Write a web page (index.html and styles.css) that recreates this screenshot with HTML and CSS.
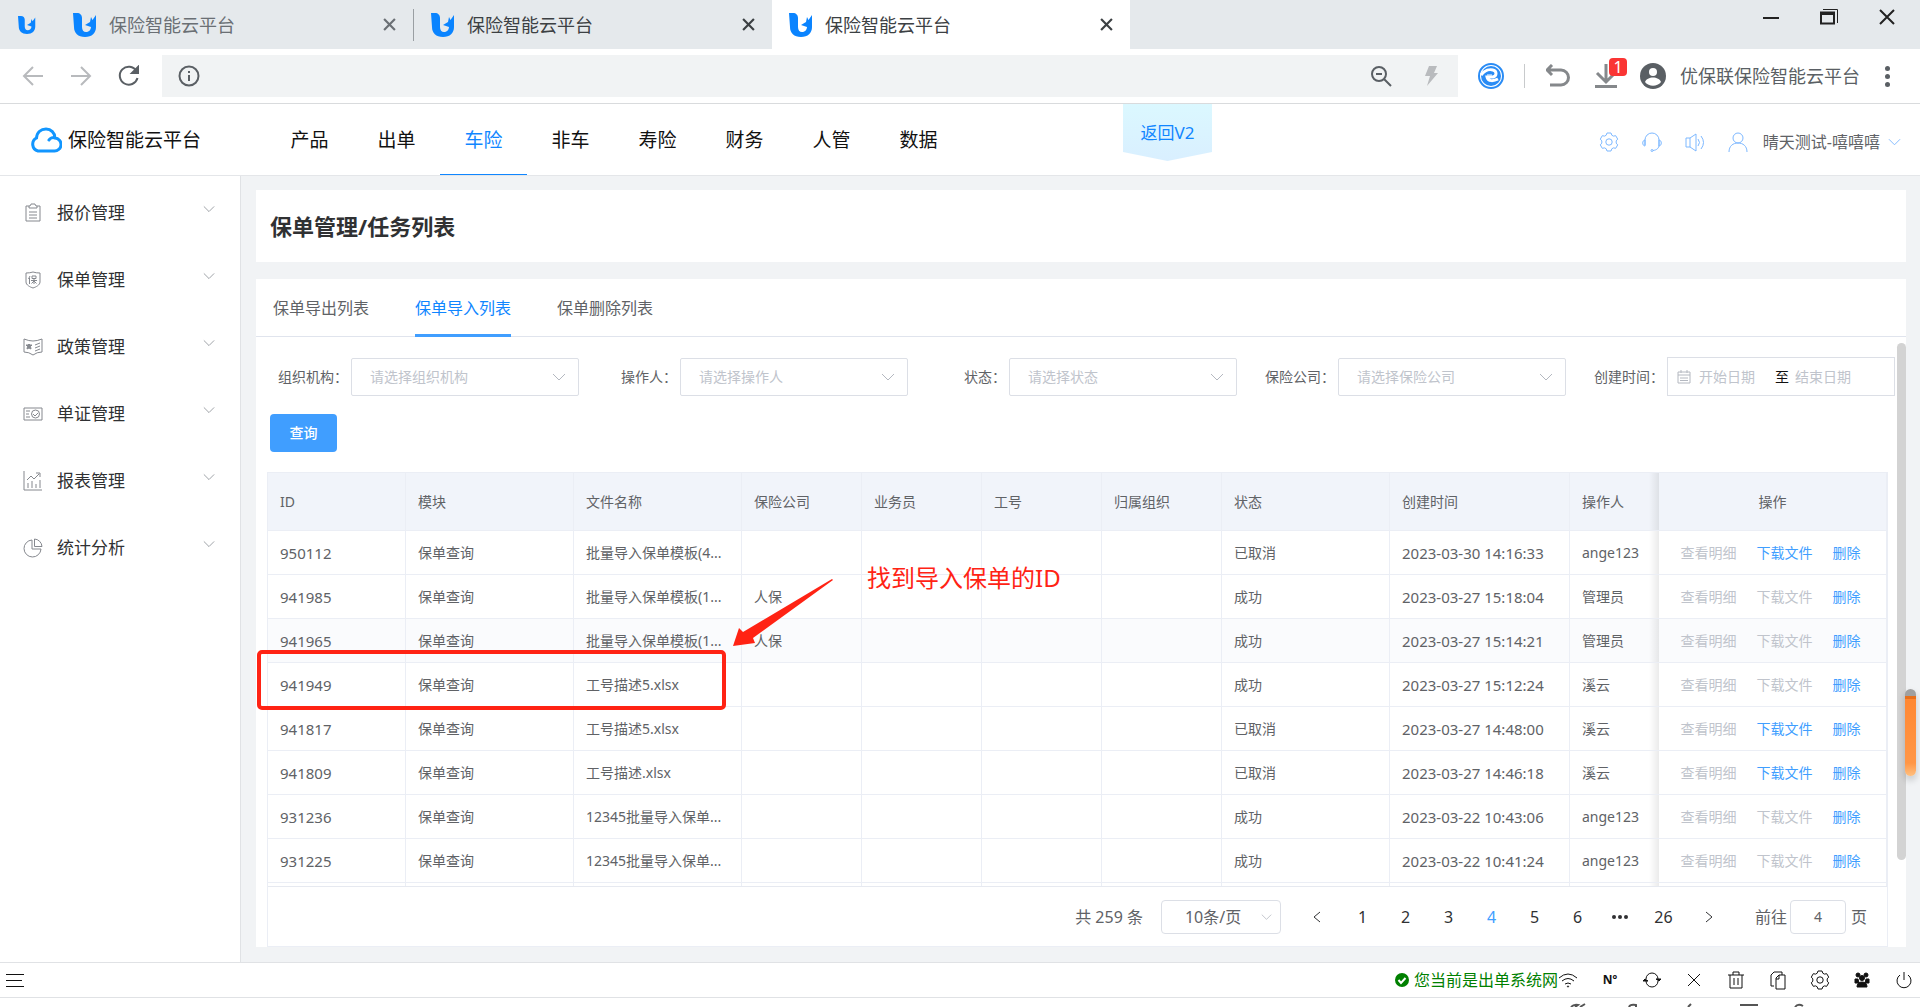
FILE: index.html
```html
<!DOCTYPE html>
<html lang="zh-CN">
<head>
  <meta charset="UTF-8" />
  <meta name="viewport" content="width=device-width, initial-scale=1.0"/>
  <title>保险智能云平台</title>
  <link rel="stylesheet" href="styles.css">
</head>
<body>

<svg class="defs" aria-hidden="true">
  <symbol id="i-logo" viewBox="0 0 24 24">
    <path fill="#0a84ff" d="M0 0h4c3 0 5 2 5 5v9c0 3 1.500 5 4 5s5-2 5-5l-6-2 5-3 1-5 1.500 3L23 2v12c0 6-4 10-11 10S1 20 1 14z"/>
  </symbol>
  <symbol id="i-down" viewBox="0 0 14 8"><path d="M1 1l6 6 6-6"/></symbol>
  <symbol id="i-close" viewBox="0 0 12 12"><path d="M1 1l10 10M11 1L1 11"/></symbol>
  <symbol id="i-gear" viewBox="0 0 20 20">
    <circle cx="10" cy="10" r="3.200"/>
    <path d="M8 1h4l.8 2.200 1.600.9 2.300-.4 2 3.400-1.500 1.800v2.200l1.500 1.800-2 3.400-2.300-.4-1.600.9L12 19H8l-.8-2.200-1.600-.9-2.300.4-2-3.400 1.500-1.800V8.900L1.300 7.100l2-3.400 2.300.4 1.600-.9z"/>
  </symbol>
</svg>

<!-- 标签栏 -->
<div class="tab-strip">
  <svg class="pin-icon"><use href="#i-logo"/></svg>
  <div class="b-tab dim"><svg class="fav"><use href="#i-logo"/></svg><span>保险智能云平台</span><button class="x" aria-label="关闭"><svg><use href="#i-close"/></svg></button></div>
  <div class="b-tab"><svg class="fav"><use href="#i-logo"/></svg><span>保险智能云平台</span><button class="x" aria-label="关闭"><svg><use href="#i-close"/></svg></button></div>
  <div class="b-tab on"><svg class="fav"><use href="#i-logo"/></svg><span>保险智能云平台</span><button class="x" aria-label="关闭"><svg><use href="#i-close"/></svg></button></div>
  <div class="win-btns">
    <button aria-label="最小化"><svg viewBox="0 0 18 18"><path d="M1 10h16" stroke-width="2"/></svg></button>
    <button aria-label="还原"><svg viewBox="0 0 18 18"><path d="M1 4.500h13v11H1zM1 6h13" stroke-width="2"/><path d="M3 1.500h14.500V15"/></svg></button>
    <button aria-label="关闭窗口"><svg viewBox="0 0 18 18"><path d="M2 2l14 14M16 2L2 16" stroke-width="2"/></svg></button>
  </div>
</div>

<!-- 工具栏 -->
<div class="toolbar">
  <div class="nav-btns">
    <button class="off" aria-label="后退"><svg viewBox="0 0 22 22"><path d="M21 11H2M11 2l-9 9 9 9"/></svg></button>
    <button class="off" aria-label="前进"><svg viewBox="0 0 22 22"><path d="M1 11h19M11 2l9 9-9 9"/></svg></button>
    <button aria-label="刷新"><svg viewBox="0 0 22 22"><path d="M18.500 6A9 9 0 1 0 19.500 13"/><path class="fill" d="M20 2v6h-6z"/></svg></button>
  </div>
  <div class="address">
    <svg class="info" viewBox="0 0 22 22"><circle cx="11" cy="11" r="9.500"/><path d="M11 10v6M11 6v2"/></svg>
    <input class="url" type="text" aria-label="地址">
    <svg class="mag" viewBox="0 0 22 22"><circle cx="9" cy="9" r="7"/><path d="M14 14l7 7M6 9h6"/></svg>
    <svg class="bolt" viewBox="0 0 14 20"><path d="M5 0h8l-3 7h4L3 20l3-10H1z"/></svg>
  </div>
  <div class="tools">
    <svg class="ie" viewBox="0 0 26 26"><circle cx="13" cy="13" r="12" fill="#fff" stroke="#2a8cf5"/><circle cx="13" cy="13" r="10" fill="#2a8cf5"/><path d="M3 12c4-5 9-6 12-5 4 1 4 6 0 7H9c1 5 7 4 11 2" fill="none" stroke="#fff" stroke-width="3"/><path d="M9 12h5" stroke="#fff" stroke-width="1"/></svg>
    <span class="sep"></span>
    <button aria-label="撤销"><svg viewBox="0 0 24 24"><path d="M1 6h14a7 7 0 0 1 0 15H4M6 1L1 6l5 5"/></svg></button>
    <button class="dl" aria-label="下载"><svg viewBox="0 0 24 24"><path d="M12 0v17M3 9l9 9 9-9M1 22.500h22"/></svg><span class="badge">1</span></button>
    <svg class="avatar" viewBox="0 0 26 26"><circle cx="13" cy="13" r="13" fill="#5a5f64"/><circle cx="13" cy="9" r="4" fill="#fff"/><path d="M5 19c2-6 14-6 16 0-4 5-12 5-16 0z" fill="#fff"/></svg>
    <span class="user-name">优保联保险智能云平台</span>
    <button class="more" aria-label="更多"><i></i><i></i><i></i></button>
  </div>
</div>

<header class="header">
  <div class="brand">
    <svg viewBox="0 0 32 26"><path d="M8 24a7 7 0 0 1-1.500-13C7 5 11 2 16 2s9 4 9 9a6.500 6.500 0 0 1-1 13zM25 11c-2-1-5 0-6 2" fill="none" stroke="#1296ff" stroke-width="3" stroke-linecap="round"/></svg>
    保险智能云平台
  </div>
  <nav class="main-nav">
    <a href="#">产品</a>
    <a href="#">出单</a>
    <a href="#" class="active">车险</a>
    <a href="#">非车</a>
    <a href="#">寿险</a>
    <a href="#">财务</a>
    <a href="#">人管</a>
    <a href="#">数据</a>
  </nav>
  <a href="#" class="back-v2">返回V2</a>
  <div class="head-icons">
    <svg viewBox="0 0 20 20"><use href="#i-gear"/></svg>
    <svg viewBox="0 0 20 20"><path d="M3 13V8a7 7 0 0 1 14 0v5c0 3-2 5-6 5.500M3 8c-3 0-3 6 0 6zM17 8c3 0 3 6 0 6z"/><circle cx="10" cy="18.500" r="1"/></svg>
    <svg viewBox="0 0 20 20"><path d="M1 6h4l6-4v17l-6-4H1zM5 6v9M13 7q3 3.500 0 7M16 4q5 6.500 0 13"/></svg>
    <svg viewBox="0 0 20 20"><circle cx="10" cy="6" r="5"/><path d="M1 20c0-6 4-9 9-9s9 3 9 9"/></svg>
    <span>晴天测试-嘻嘻嘻</span>
    <svg class="arrow"><use href="#i-down"/></svg>
  </div>
</header>

<div class="layout">
  <aside class="sidebar">
    <a href="#"><svg class="ico" viewBox="0 0 20 20"><path d="M6 3H3v15h14V3h-3M6 5V3q2 0 2-2h4q0 2 2 2v2zM6 9h8M6 12h8M6 15h8"/></svg>报价管理<svg class="arrow"><use href="#i-down"/></svg></a>
    <a href="#"><svg class="ico" viewBox="0 0 20 20"><path d="M3 3q4 0 7-1 3 1 7 1v9c0 3-4 5-7 6-3-1-7-3-7-6zM7 6L5.500 9M6.500 8v6M9 6h4v2.500H9zM8 10.500h6M11 9v5M11 11l-2.500 2.500M11 11l2.500 2.500"/></svg>保单管理<svg class="arrow"><use href="#i-down"/></svg></a>
    <a href="#"><svg class="ico" viewBox="0 0 20 20"><path d="M1 2q5 2 9 2 4 0 9-2v13q-5 0-9 3-4-3-9-3zM12 8l5-2M12 11l5-2M12 14l5-2"/><path class="fill" d="M6 7l1 1h2L7.500 9.500 8 12l-2-1-2 1 .5-2.500L3 8h2z"/></svg>政策管理<svg class="arrow"><use href="#i-down"/></svg></a>
    <a href="#"><svg class="ico" viewBox="0 0 20 20"><path d="M1 4h18v12H1zM3 7h4M3 10h3M3 13h4M10 10l2 2 3-3"/><circle cx="12.500" cy="10" r="4"/></svg>单证管理<svg class="arrow"><use href="#i-down"/></svg></a>
    <a href="#"><svg class="ico" viewBox="0 0 20 20"><path d="M1 0v19h18M4 9l4-4 3 3 5-5M13 2h4v4M5 17v-5M9 17v-7M13 17v-4M17 17V9"/></svg>报表管理<svg class="arrow"><use href="#i-down"/></svg></a>
    <a href="#"><svg class="ico" viewBox="0 0 20 20"><path d="M9 2a8.500 8.500 0 1 0 9 9H9zM11.500 1v7.500H19A8 8 0 0 0 11.500 1z"/></svg>统计分析<svg class="arrow"><use href="#i-down"/></svg></a>
  </aside>

  <main class="content">
    <h1 class="page-title">保单管理/任务列表</h1>

    <section class="card">
      <div class="tabs">
        <a href="#">保单导出列表</a>
        <a href="#" class="active">保单导入列表</a>
        <a href="#">保单删除列表</a>
      </div>

      <form class="filters">
        <div class="field"><label for="org">组织机构：</label><div class="select"><select id="org"><option>请选择组织机构</option></select><svg><use href="#i-down"/></svg></div></div>
        <div class="field"><label for="operator">操作人：</label><div class="select"><select id="operator"><option>请选择操作人</option></select><svg><use href="#i-down"/></svg></div></div>
        <div class="field"><label for="status">状态：</label><div class="select"><select id="status"><option>请选择状态</option></select><svg><use href="#i-down"/></svg></div></div>
        <div class="field"><label for="company">保险公司：</label><div class="select"><select id="company"><option>请选择保险公司</option></select><svg><use href="#i-down"/></svg></div></div>
        <div class="field"><label for="start">创建时间：</label>
          <div class="date-range">
            <svg viewBox="0 0 14 14"><path d="M1 2h12v11H1zM1 5h12M4 0v3M10 0v3M3 8h8M3 10.500h8"/></svg>
            <input id="start" type="text" placeholder="开始日期">
            <span>至</span>
            <input type="text" placeholder="结束日期" aria-label="结束日期">
          </div>
        </div>
        <button type="button" class="btn-query">查询</button>
      </form>

      <div class="list-box">
        <div class="table-wrap">
          <table>
            <colgroup>
              <col class="c-id"><col class="c-mid"><col class="c-mid"><col class="c-sm"><col class="c-sm"><col class="c-sm"><col class="c-sm"><col class="c-mid"><col class="c-time"><col class="c-op"><col class="c-act">
            </colgroup>
            <thead>
              <tr><th>ID</th><th>模块</th><th>文件名称</th><th>保险公司</th><th>业务员</th><th>工号</th><th>归属组织</th><th>状态</th><th>创建时间</th><th class="op">操作人</th><th class="act">操作</th></tr>
            </thead>
            <tbody>
              <tr><td class="num">950112</td><td>保单查询</td><td>批量导入保单模板(4...</td><td></td><td></td><td></td><td></td><td>已取消</td><td class="num">2023-03-30 14:16:33</td><td class="op">ange123</td><td class="act"><button disabled>查看明细</button><button>下载文件</button><button>删除</button></td></tr>
              <tr><td class="num">941985</td><td>保单查询</td><td>批量导入保单模板(1...</td><td>人保</td><td></td><td></td><td></td><td>成功</td><td class="num">2023-03-27 15:18:04</td><td class="op">管理员</td><td class="act"><button disabled>查看明细</button><button disabled>下载文件</button><button>删除</button></td></tr>
              <tr class="hover"><td class="num">941965</td><td>保单查询</td><td>批量导入保单模板(1...</td><td>人保</td><td></td><td></td><td></td><td>成功</td><td class="num">2023-03-27 15:14:21</td><td class="op">管理员</td><td class="act"><button disabled>查看明细</button><button disabled>下载文件</button><button>删除</button></td></tr>
              <tr><td class="num">941949</td><td>保单查询</td><td>工号描述5.xlsx</td><td></td><td></td><td></td><td></td><td>成功</td><td class="num">2023-03-27 15:12:24</td><td class="op">溪云</td><td class="act"><button disabled>查看明细</button><button disabled>下载文件</button><button>删除</button></td></tr>
              <tr><td class="num">941817</td><td>保单查询</td><td>工号描述5.xlsx</td><td></td><td></td><td></td><td></td><td>已取消</td><td class="num">2023-03-27 14:48:00</td><td class="op">溪云</td><td class="act"><button disabled>查看明细</button><button>下载文件</button><button>删除</button></td></tr>
              <tr><td class="num">941809</td><td>保单查询</td><td>工号描述.xlsx</td><td></td><td></td><td></td><td></td><td>已取消</td><td class="num">2023-03-27 14:46:18</td><td class="op">溪云</td><td class="act"><button disabled>查看明细</button><button>下载文件</button><button>删除</button></td></tr>
              <tr><td class="num">931236</td><td>保单查询</td><td>12345批量导入保单...</td><td></td><td></td><td></td><td></td><td>成功</td><td class="num">2023-03-22 10:43:06</td><td class="op">ange123</td><td class="act"><button disabled>查看明细</button><button disabled>下载文件</button><button>删除</button></td></tr>
              <tr><td class="num">931225</td><td>保单查询</td><td>12345批量导入保单...</td><td></td><td></td><td></td><td></td><td>成功</td><td class="num">2023-03-22 10:41:24</td><td class="op">ange123</td><td class="act"><button disabled>查看明细</button><button disabled>下载文件</button><button>删除</button></td></tr>
              <tr><td></td><td></td><td></td><td></td><td></td><td></td><td></td><td></td><td></td><td class="op"></td><td class="act"></td></tr>
            </tbody>
          </table>
        </div>
        <div class="pager">
          <span class="total">共 259 条</span>
          <div class="select size"><select aria-label="每页条数"><option>10条/页</option></select><svg><use href="#i-down"/></svg></div>
          <div class="pages">
            <button class="step" aria-label="上一页"><svg viewBox="0 0 8 12"><path d="M7 1L1 6l6 5"/></svg></button>
            <button>1</button>
            <button>2</button>
            <button>3</button>
            <button class="active">4</button>
            <button>5</button>
            <button>6</button>
            <button aria-label="更多页"><svg class="dots" viewBox="0 0 16 4"><circle cx="2" cy="2" r="2"/><circle cx="8" cy="2" r="2"/><circle cx="14" cy="2" r="2"/></svg></button>
            <button>26</button>
            <button class="step" aria-label="下一页"><svg viewBox="0 0 8 12"><path d="M1 1l6 5-6 5"/></svg></button>
          </div>
          <label for="goto">前往</label><input id="goto" type="text" value="4"><span>页</span>
        </div>
      </div>

      <div class="scrollbar"></div>
      <!-- 标注 -->
      <div class="mark-box"></div>
      <svg class="mark-arrow" viewBox="0 0 100 68"><path d="M99 0l1 1-80 58 2 5-22 3 6-18 4 4z" fill="#ff2314"/></svg>
      <div class="mark-text">找到导入保单的ID</div>
    </section>
  </main>
  <div class="float-bar"></div>
</div>

<footer class="status-bar">
  <button class="menu" aria-label="菜单"><svg viewBox="0 0 18 14"><path d="M0 1.500h18M0 7.500h16M0 13.500h18"/></svg></button>
  <div class="net"><svg viewBox="0 0 14 14"><circle cx="7" cy="7" r="7" fill="#008000"/><path d="M3.500 7l2.500 3 4.500-5" fill="none" stroke="#fff" stroke-width="2"/></svg>您当前是出单系统网</div>
  <div class="status-icons">
    <button aria-label="网络"><svg viewBox="0 0 20 20"><path d="M1 8q9-8 18 0M4 11q6-5 12 0M7 14q3-2 6 0"/><circle cx="10" cy="16.500" r=".6"/></svg></button>
    <button class="no">Nº</button>
    <button aria-label="刷新"><svg viewBox="0 0 20 20"><path d="M4 9a6 6 0 0 1 12 0M16 11a6 6 0 0 1-12 0"/><path class="fill" d="M14 9h5l-2 2zM1 11h5L3 9z"/></svg></button>
    <button aria-label="关闭"><svg viewBox="0 0 20 20"><path d="M4 4l12 12M16 4L4 16"/></svg></button>
    <button aria-label="删除"><svg viewBox="0 0 20 20"><path d="M2 5h16M7 5V2h6v3M4 5v13h12V5M8 8v7M12 8v7"/></svg></button>
    <button aria-label="复制"><svg viewBox="0 0 20 20"><path d="M6 16H3V5l3-3h8v3M8 8l3-3h6v14H8zM11 5v4H8"/></svg></button>
    <button aria-label="设置"><svg viewBox="0 0 20 20"><use href="#i-gear"/></svg></button>
    <button aria-label="用户"><svg class="solid" viewBox="0 0 20 20"><circle cx="6" cy="5" r="2"/><circle cx="14" cy="5" r="2"/><circle cx="10" cy="8" r="2.500"/><path d="M3 9h3l1 4H3zM14 9h3v4h-4zM5 17q0-5 5-5t5 5z"/></svg></button>
    <button aria-label="退出"><svg viewBox="0 0 20 20"><path d="M6 5a7 7 0 1 0 8 0M10 2v8"/></svg></button>
  </div>
</footer>
<div class="tray">
  <svg viewBox="0 0 240 4"><path d="M3 4q3-3 7-2l-3 2M12 4l5-3M61 4q1-3 7-2v2M120 4l3-3M172 2h18M227 4q3-4 8-1" fill="none" stroke="#555" stroke-width="2"/></svg>
</div>

</body>
</html>
```

FILE: styles.css
```css
* {
  box-sizing: border-box;
}

body {
  margin: 0;
  height: 100vh;
  display: flex;
  flex-direction: column;
  font-family: "Noto Sans", "Noto Sans CJK SC", sans-serif;
  font-size: 14px;
  line-height: 20px;
  color: #606266;
  background: #fff;
  overflow: hidden;
}

a {
  color: inherit;
  text-decoration: none;
}

button, input, select {
  font: inherit;
  color: inherit;
  border: none;
  background: none;
  padding: 0;
  margin: 0;
}

button {
  cursor: pointer;
}

svg {
  display: block;
  flex: none;
  fill: none;
  stroke: currentColor;
}

.defs {
  position: absolute;
  width: 0;
  height: 0;
}

.fill {
  fill: currentColor;
}

/* tab strip */
.tab-strip {
  flex: none;
  height: 49px;
  display: flex;
  align-items: center;
  background: #e5e9ec;
  font-size: 18px;
  color: #3c4043;
}

.tab-strip use {
  stroke-width: 2;
}

.pin-icon, .fav {
  stroke: none;
}

.pin-icon {
  width: 18px;
  height: 18px;
  margin: 0 20px 0 18px;
}

.b-tab {
  flex: 0 1 358px;
  height: 49px;
  display: flex;
  align-items: center;
  gap: 12px;
  padding: 0 17px;
}

.b-tab.dim {
  color: #6a6f74;
  border-image: linear-gradient(transparent 10px, #9a9fa3 10px, #9a9fa3 40px, transparent 40px) 1;
  border-right: 1px solid;
}

.b-tab.on {
  background: #fff;
}

.fav {
  width: 24px;
  height: 24px;
}

.x {
  margin-left: auto;
}

.x svg {
  width: 13px;
  height: 13px;
}

.win-btns {
  margin-left: auto;
  align-self: flex-start;
  display: flex;
  gap: 40px;
  padding: 8px 24px 0 0;
  color: #222;
}

.win-btns svg {
  width: 18px;
  height: 18px;
}

/* toolbar */
.toolbar {
  flex: none;
  height: 55px;
  display: flex;
  align-items: center;
  border-bottom: 1px solid #d9dbdd;
  color: #5a5f64;
}

.toolbar svg {
  stroke-width: 2;
}

.nav-btns {
  display: flex;
  gap: 26px;
  padding: 0 22px 0 22px;
}

.nav-btns svg {
  width: 22px;
  height: 22px;
}

.off {
  color: #b8babd;
}

.address {
  flex: 1;
  height: 42px;
  display: flex;
  align-items: center;
  padding: 0 20px 0 16px;
  background: #f1f3f4;
}

.address .info, .address .mag {
  width: 22px;
  height: 22px;
}

.url {
  flex: 1;
  min-width: 0;
}

.address .bolt {
  width: 14px;
  height: 20px;
  margin-left: 32px;
  fill: #b9bbbe;
  stroke: none;
}

.tools {
  display: flex;
  align-items: center;
  padding: 0 29px 0 20px;
  font-size: 18px;
}

.ie, .avatar {
  width: 26px;
  height: 26px;
  stroke: none;
}

.sep {
  width: 1px;
  height: 24px;
  margin: 0 21px 0 20px;
  background: #c8cacc;
}

.tools button svg {
  width: 24px;
  height: 24px;
  stroke-width: 3;
  color: #85888b;
}

.tools .dl {
  position: relative;
  margin: 0 22px 0 24px;
}

.badge {
  position: absolute;
  left: 15px;
  top: -6px;
  width: 18px;
  height: 18px;
  border-radius: 4px;
  background: #fa3534;
  color: #fff;
  font-size: 16px;
  line-height: 18px;
}

.user-name {
  margin: 0 23px 0 14px;
}

.more {
  display: flex;
  flex-direction: column;
  gap: 3px;
  width: 8px;
  align-items: center;
}

.more i {
  width: 5px;
  height: 5px;
  border-radius: 50%;
  background: #5a5f64;
}

/* app header */
.header {
  position: relative;
  flex: none;
  height: 72px;
  display: flex;
  align-items: center;
  border-bottom: 1px solid #e4e6e9;
  font-size: 19px;
  color: #111;
}

.brand {
  width: 266px;
  display: flex;
  align-items: center;
  gap: 6px;
  padding-left: 30px;
}

.brand svg {
  width: 32px;
  height: 26px;
}

.main-nav {
  display: flex;
  align-self: stretch;
}

.main-nav a {
  min-width: 87px;
  text-align: center;
  line-height: 72px;
}

.main-nav .active {
  color: #1086ff;
  box-shadow: inset 0 -1px #1086ff;
}

.back-v2 {
  align-self: flex-start;
  width: 89px;
  height: 57px;
  margin-left: 161px;
  text-align: center;
  font-size: 17px;
  line-height: 57px;
  color: #1086ff;
  background: linear-gradient(#dbf8ff, #d9efff);
  clip-path: polygon(0 0, 100% 0, 100% 48px, 50% 100%, 0 48px);
}

.head-icons {
  margin-left: auto;
  display: flex;
  align-items: center;
  gap: 23px;
  padding: 4px 19px 0 0;
  color: #7db8ff;
}

.head-icons svg {
  width: 20px;
  height: 20px;
}

.head-icons span {
  margin: 0 -15px 0 -8px;
  font-size: 16px;
  color: #606266;
}

.head-icons .arrow {
  width: 13px;
  height: 8px;
}

/* layout */
.layout {
  position: relative;
  flex: 1;
  min-height: 0;
  display: flex;
}

.sidebar {
  flex: none;
  width: 241px;
  padding-top: 3px;
  border-right: 1px solid #e0e2e5;
}

.sidebar a {
  display: flex;
  align-items: center;
  height: 67px;
  padding: 0 25px 0 23px;
  font-size: 17px;
  color: #303133;
}

.sidebar .ico {
  width: 20px;
  height: 20px;
  margin-right: 14px;
  color: #85888e;
}

.sidebar .arrow {
  width: 12px;
  height: 8px;
  margin: 0 0 8px auto;
  color: #8f9399;
}

.content {
  flex: 1;
  min-width: 0;
  display: flex;
  flex-direction: column;
  gap: 17px;
  padding: 14px 14px 15px 15px;
  background: #f1f3f5;
}

.page-title {
  margin: 0;
  padding: 0 14px;
  font-size: 22px;
  line-height: 72px;
  color: #303133;
  background: #fff;
}

.card {
  position: relative;
  flex: 1;
  min-height: 0;
  display: flex;
  flex-direction: column;
  background: #fff;
}

.tabs {
  display: flex;
  gap: 46px;
  padding: 0 17px;
  border-bottom: 1px solid #e0e4ed;
  font-size: 16px;
  line-height: 58px;
}

.tabs a {
  margin-bottom: -1px;
}

.tabs .active {
  color: #1086ff;
  box-shadow: inset 0 -3px #409eff;
}

.filters {
  display: grid;
  grid-template-columns: repeat(5, 1fr);
  gap: 18px 28px;
  padding: 20px 11px 20px 22px;
}

.field {
  display: flex;
  align-items: center;
  justify-content: flex-end;
  gap: 3px;
}

.select {
  position: relative;
  width: 228px;
  height: 38px;
}

.select select {
  appearance: none;
  width: 100%;
  height: 100%;
  padding: 0 32px 0 18px;
  border: 1px solid #dcdfe6;
  border-radius: 2px;
  color: #c0c4cc;
}

.select svg {
  position: absolute;
  right: 13px;
  top: 50%;
  width: 14px;
  height: 8px;
  margin-top: -4px;
  color: #b4b8c0;
  pointer-events: none;
}

.date-range {
  display: flex;
  align-items: center;
  width: 228px;
  height: 39px;
  padding: 0 9px;
  border: 1px solid #dcdfe6;
}

.date-range svg {
  width: 14px;
  height: 14px;
  margin-right: 8px;
  color: #b4b8c0;
}

.date-range input {
  width: 76px;
}

.date-range span {
  margin-right: 6px;
  color: #111;
}

.date-range ::placeholder {
  color: #c0c4cc;
  opacity: 1;
}

.btn-query {
  width: 67px;
  height: 38px;
  margin-left: -8px;
  border-radius: 4px;
  background: #409eff;
  color: #fff;
  font-weight: 500;
}

/* table */
.list-box {
  flex: 1;
  min-height: 0;
  display: flex;
  flex-direction: column;
  margin: 0 18px 0 11px;
  border: 1px solid #ebeef5;
  border-top: none;
}

.table-wrap {
  flex: 1;
  min-height: 0;
  overflow: hidden;
}

table {
  width: 100%;
  table-layout: fixed;
  border-collapse: separate;
  border-spacing: 0;
  border-top: 1px solid #ebeef5;
}

.c-id { width: 138px; }
.c-mid { width: 168px; }
.c-sm { width: 120px; }
.c-time { width: 180px; }
.c-op { width: 89px; }
.c-act { width: 228px; }

th, td {
  height: 44px;
  padding: 0 0 0 12px;
  border-right: 1px solid #ebeef5;
  border-bottom: 1px solid #ebeef5;
  text-align: left;
  font-weight: normal;
  white-space: nowrap;
}

th {
  height: 58px;
  background-color: #f1f4fa;
}

.num {
  font-size: 15px;
}

.hover td {
  background-color: #fafbfd;
}

.op {
  border-right: none;
  background-image: linear-gradient(to left, rgba(0, 0, 0, 0.08), transparent);
  background-size: 10px 100%;
  background-position: right;
  background-repeat: no-repeat;
}

.act {
  padding: 0;
  text-align: center;
}

td.act {
  padding-right: 4px;
}

.act button {
  margin: 0 10px;
  color: #409eff;
}

.act button:disabled {
  color: #c0c4cc;
}

/* pagination */
.pager {
  flex: none;
  height: 60px;
  display: flex;
  align-items: center;
  justify-content: flex-end;
  padding-right: 20px;
  border-top: 1px solid #e6e9f0;
  font-size: 16px;
}

.size {
  width: 120px;
  height: 34px;
  margin: 0 12px 0 18px;
}

.size select {
  padding: 0 23px;
  border-radius: 4px;
  color: #606266;
}

.size svg {
  right: 9px;
  width: 11px;
}

.pages {
  display: flex;
  margin-right: 22px;
  color: #303133;
}

.pages button {
  width: 43px;
  height: 34px;
}

.pages .step {
  width: 48px;
}

.pages svg {
  width: 8px;
  height: 12px;
  margin: 0 auto;
  stroke-width: 1;
}

.pages .dots {
  width: 16px;
  height: 4px;
  fill: currentColor;
  stroke: none;
}

.pages .active {
  color: #409eff;
}

#goto {
  width: 56px;
  height: 34px;
  margin: 0 5px 0 3px;
  border: 1px solid #dcdfe6;
  border-radius: 4px;
  text-align: center;
  font-size: 14px;
}

.scrollbar {
  position: absolute;
  right: 0;
  top: 64px;
  width: 9px;
  height: 517px;
  border-radius: 5px;
  background: #d3d3d3;
}

.float-bar {
  position: absolute;
  right: 4px;
  top: 513px;
  width: 11px;
  height: 87px;
  border-radius: 6px;
  background: linear-gradient(#a0a0a0 7px, #e8701c 7px, #e8701c 10px, #ff8833 10px, #ff9646 74px, #ffc080);
  box-shadow: 0 4px 6px 1px rgba(0, 0, 0, 0.15);
}

/* red marks over the list */
.mark-box {
  position: absolute;
  left: 1px;
  top: 371px;
  width: 469px;
  height: 60px;
  border: 4px solid #ff2314;
  border-radius: 5px;
}

.mark-arrow {
  position: absolute;
  left: 477px;
  top: 300px;
  width: 100px;
  height: 68px;
  stroke: none;
}

.mark-text {
  position: absolute;
  left: 611px;
  top: 283px;
  font-size: 24px;
  line-height: 32px;
  color: #ff2314;
}

/* bottom */
.status-bar {
  flex: none;
  height: 36px;
  display: flex;
  align-items: center;
  padding: 0 6px;
  border-top: 1px solid #e0e2e5;
  border-bottom: 1px solid #e0e2e5;
  color: #111;
}

.menu svg {
  width: 18px;
  height: 14px;
}

.net {
  margin-left: auto;
  display: flex;
  align-items: center;
  gap: 5px;
  font-size: 16px;
  color: #008000;
}

.net svg {
  width: 14px;
  height: 14px;
  stroke: none;
}

.status-icons {
  display: flex;
  gap: 22px;
}

.status-icons button {
  width: 20px;
}

.status-icons svg {
  width: 20px;
  height: 20px;
  margin: 0 auto;
}

.status-icons .solid {
  fill: currentColor;
}

.no {
  font-size: 12px;
  font-weight: bold;
}

.tray {
  flex: none;
  height: 9px;
  display: flex;
  align-items: flex-end;
  justify-content: flex-end;
  padding-right: 112px;
}

.tray svg {
  width: 240px;
  height: 4px;
}
```
